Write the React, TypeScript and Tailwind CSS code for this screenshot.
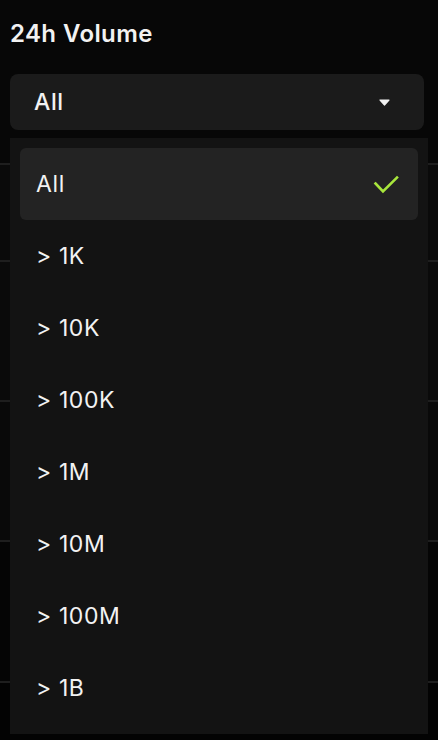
import { useState } from "react";

const OPTIONS = ["All", "> 1K", "> 10K", "> 100K", "> 1M", "> 10M", "> 100M", "> 1B"];

// background table rows behind the open dropdown
const ROWS = [
  { h: "h-[97px]", bg: "bg-[#0a0a0a]" },
  { h: "h-[140px]", bg: "bg-[#0a0a0a]" },
  { h: "h-[140px]", bg: "bg-[#090909]" },
  { h: "h-[141px]", bg: "bg-[#050505]" },
  { h: "h-[60px]", bg: "bg-[#030303]" },
];

export default function App() {
  const [value, setValue] = useState("All");

  return (
    <div
      className="relative w-[438px] h-[740px] overflow-hidden bg-[#070707] text-[#f2f2f2]"
      style={{ fontFamily: "Inter, 'Noto Sans', sans-serif" }}
    >
      <div className="px-[10px] pt-[18px]">
        <h2 className="text-[24px] leading-[32px] font-semibold tracking-[0.4px]">24h Volume</h2>

        <button className="mt-[24px] flex w-[414px] h-[56px] items-center justify-between rounded-[8px] bg-[#1b1b1b] pl-[24px] pr-[34px]">
          <span className="text-[23px] font-medium tracking-[0.6px]">{value}</span>
          <svg width="11" height="7" viewBox="0 0 11 7" className="fill-[#f2f2f2]">
            <path d="M1 1h9L5.5 6z" strokeLinejoin="round" stroke="#f2f2f2" strokeWidth="1.2" />
          </svg>
        </button>
      </div>

      {/* table rows peeking out behind the menu */}
      <div className="mt-[33px] flex flex-col">
        {ROWS.map((r, i) => (
          <div key={i} className={`${r.h} ${r.bg} border-t-[2px] border-[#1e1e1e]`} />
        ))}
      </div>

      {/* open menu */}
      <div className="absolute left-[10px] top-[138px] w-[418px] bg-[#131313] p-[10px]">
        <ul className="flex flex-col">
          {OPTIONS.map((o) => (
            <li
              key={o}
              onClick={() => setValue(o)}
              className={`flex h-[72px] items-center justify-between rounded-[6px] pl-[16px] pr-[16px] text-[23px] tracking-[0.6px] ${
                o === value ? "bg-[#232323]" : ""
              }`}
            >
              <span>{o}</span>
              {o === value && (
                <svg width="30" height="24" viewBox="0 0 30 24" fill="none" stroke="#a8e63c" strokeWidth="2.6" strokeLinecap="square" strokeLinejoin="miter">
                  <path d="M3.5 11.5l7.5 8L25 5.5" />
                </svg>
              )}
            </li>
          ))}
        </ul>
      </div>
    </div>
  );
}
